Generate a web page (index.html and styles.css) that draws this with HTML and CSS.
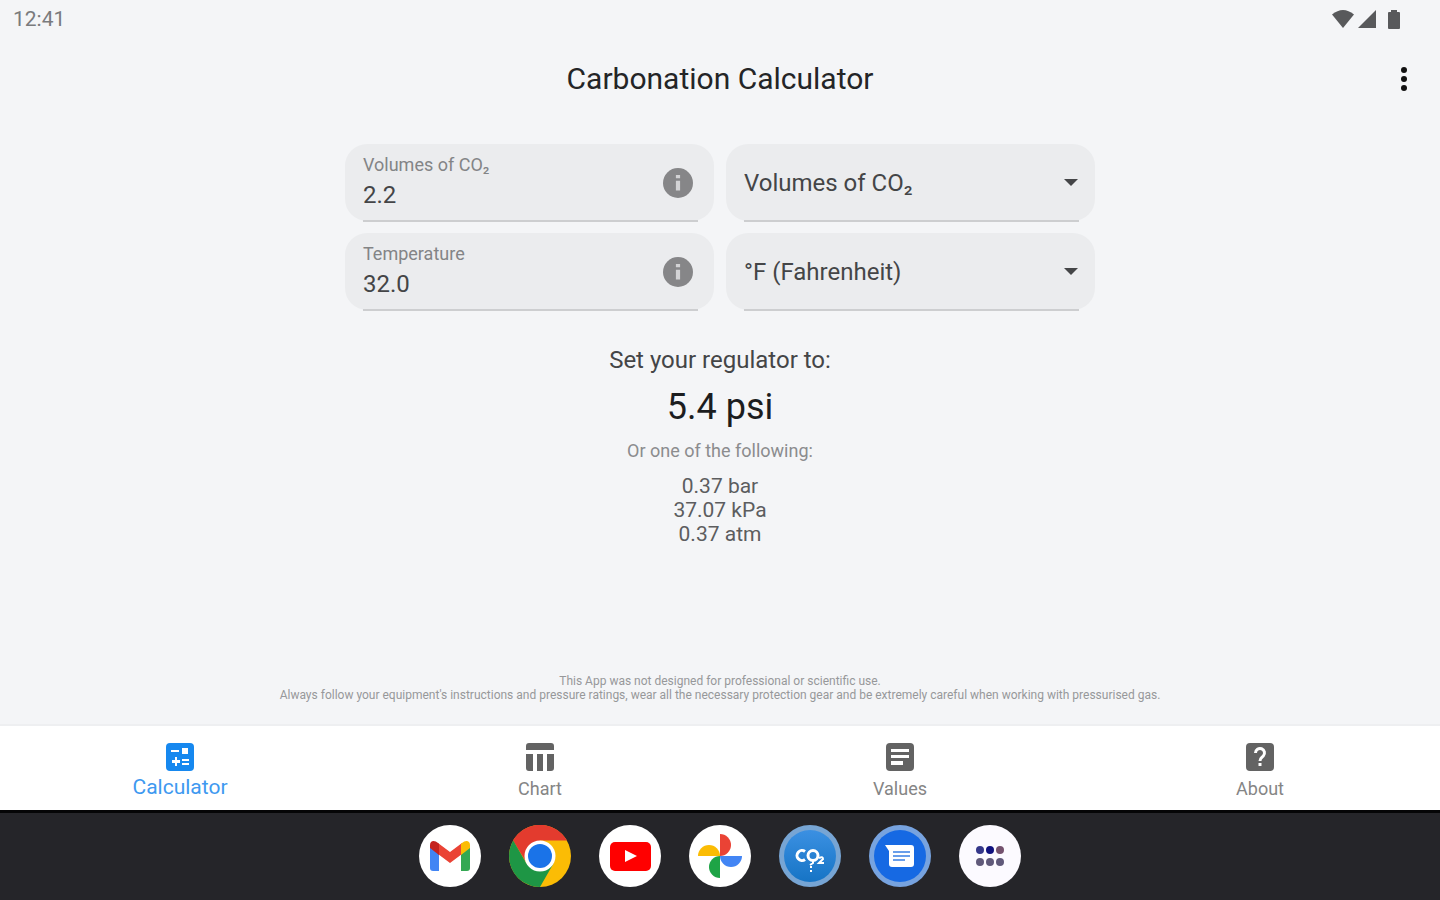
FILE: index.html
```html
<!DOCTYPE html>
<html lang="en">
<head>
<meta charset="utf-8">
<meta name="viewport" content="width=device-width, initial-scale=1">
<title>Carbonation Calculator</title>
<link rel="stylesheet" href="styles.css">
</head>
<body>
<div class="status-bar">
  <time class="clock">12:41</time>
  <div class="status-icons">
    <svg class="wifi" viewBox="0 0 22 18" aria-hidden="true"><path d="M0 4.500Q11-4.500 22 4.500L11 18Z"/></svg>
    <svg class="signal" viewBox="0 0 18 18" aria-hidden="true"><path d="M18 0V18H0Z"/></svg>
    <svg class="battery" viewBox="0 0 12 19" aria-hidden="true"><path d="M3 0h6v2H11a1 1 0 0 1 1 1v15a1 1 0 0 1-1 1H1a1 1 0 0 1-1-1V3a1 1 0 0 1 1-1h2z"/></svg>
  </div>
</div>

<header class="app-bar">
  <h1 class="app-title">Carbonation Calculator</h1>
  <button class="menu-button" type="button" aria-label="More options">
    <svg viewBox="0 0 8 26" aria-hidden="true"><circle cx="4" cy="4" r="3"/><circle cx="4" cy="13" r="3"/><circle cx="4" cy="22" r="3"/></svg>
  </button>
</header>

<main class="content">
  <form class="fields">
    <div class="field">
      <div class="field-text">
        <label class="field-label" for="volumes">Volumes of CO₂</label>
        <input class="field-input" id="volumes" type="text" inputmode="decimal" value="2.2">
      </div>
      <button class="info-button" type="button" aria-label="About volumes of CO₂">
        <svg viewBox="0 0 24 24" aria-hidden="true"><circle cx="12" cy="12" r="10"/><path fill="#d3d3d5" d="M10.600 10.500h2.800V17h-2.800zM10.600 6.600h2.800v2.200h-2.800z"/></svg>
      </button>
    </div>
    <div class="field">
      <select class="field-select" aria-label="Carbonation unit"><option>Volumes of CO₂</option></select>
      <svg class="caret" viewBox="0 0 14 7" aria-hidden="true"><path d="M0 0h14L7 7z"/></svg>
    </div>
    <div class="field">
      <div class="field-text">
        <label class="field-label" for="temperature">Temperature</label>
        <input class="field-input" id="temperature" type="text" inputmode="decimal" value="32.0">
      </div>
      <button class="info-button" type="button" aria-label="About temperature">
        <svg viewBox="0 0 24 24" aria-hidden="true"><circle cx="12" cy="12" r="10"/><path fill="#d3d3d5" d="M10.600 10.500h2.800V17h-2.800zM10.600 6.600h2.800v2.200h-2.800z"/></svg>
      </button>
    </div>
    <div class="field">
      <select class="field-select" aria-label="Temperature unit"><option>°F (Fahrenheit)</option></select>
      <svg class="caret" viewBox="0 0 14 7" aria-hidden="true"><path d="M0 0h14L7 7z"/></svg>
    </div>
  </form>

  <section class="result">
    <p class="result-lead">Set your regulator to:</p>
    <p class="result-value">5.4 psi</p>
    <p class="result-note">Or one of the following:</p>
    <ul class="result-list">
      <li>0.37 bar</li>
      <li>37.07 kPa</li>
      <li>0.37 atm</li>
    </ul>
  </section>

  <p class="disclaimer">This App was not designed for professional or scientific use.<br>Always follow your equipment's instructions and pressure ratings, wear all the necessary protection gear and be extremely careful when working with pressurised gas.</p>
</main>

<nav class="tabs">
  <a class="tab tab-active" href="#calculator" aria-current="page">
    <svg viewBox="0 0 28 28" aria-hidden="true"><rect width="28" height="28" rx="4"/><g fill="#fff"><path d="M5 7h8v2H5zM16 5h6v6h-6zM9 14h2v3h3v3h-3v3H9v-3H6v-3h3zM16 16h7v2h-7zM16 20h7v2h-7z"/></g></svg>
    <span>Calculator</span>
  </a>
  <a class="tab" href="#chart">
    <svg viewBox="0 0 28 28" aria-hidden="true"><path d="M3 0h22a3 3 0 0 1 3 3v4H0V3a3 3 0 0 1 3-3zM0 11h7v17H3a3 3 0 0 1-3-3zM11 11h6v17h-6zM21 11h7v14a3 3 0 0 1-3 3h-4z"/></svg>
    <span>Chart</span>
  </a>
  <a class="tab" href="#values">
    <svg viewBox="0 0 28 28" aria-hidden="true"><rect width="28" height="28" rx="4"/><path fill="#fff" d="M5 6h18v3H5zM5 12h18v3H5zM5 18h12v4H5z"/></svg>
    <span>Values</span>
  </a>
  <a class="tab" href="#about">
    <svg viewBox="0 0 28 28" aria-hidden="true"><rect width="28" height="28" rx="4"/><path fill="none" stroke="#fff" stroke-width="3" d="M9.500 10a4.500 4.500 0 1 1 7.800 3c-1.700 1.800-3.300 2.300-3.300 5"/><path fill="#fff" d="M12.500 20h3v3h-3z"/></svg>
    <span>About</span>
  </a>
</nav>

<footer class="dock">
  <button class="app" type="button" aria-label="Gmail">
    <svg viewBox="0 0 62 62" aria-hidden="true"><circle cx="31" cy="31" r="31" fill="#fff"/><path fill="#4285f4" d="M11 22l9 7v17h-6a3 3 0 0 1-3-3z"/><path fill="#34a853" d="M51 22l-9 7v17h6a3 3 0 0 0 3-3z"/><path fill="#ea4335" d="M19 18l12 9 12-9v11l-12 9-12-9z"/><path fill="#c5221f" d="M11 20c0-5 5-5 8-2l1 1v11l-9-7z"/><path fill="#fbbc04" d="M51 20c0-5-5-5-8-2l-1 1v11l9-7z"/></svg>
  </button>
  <button class="app" type="button" aria-label="Chrome">
    <svg viewBox="0 0 62 62" aria-hidden="true"><circle cx="31" cy="31" r="31" fill="#fbbc05"/><path fill="#e33b2e" d="M4 15.500A31 31 0 0 1 58 15.500H31L18 38.500z"/><path fill="#1e9645" d="M4.200 15.500A31 31 0 0 0 31 62L44.500 38.500H17.500z"/><circle cx="31" cy="31" r="15.500" fill="#fff"/><circle cx="31" cy="31" r="12" fill="#1a73e8"/></svg>
  </button>
  <button class="app" type="button" aria-label="YouTube">
    <svg viewBox="0 0 62 62" aria-hidden="true"><circle cx="31" cy="31" r="31" fill="#fff"/><rect x="11" y="17" width="41" height="29" rx="5" fill="#f00"/><path fill="#fff" d="M26 25l12 6-12 6z"/></svg>
  </button>
  <button class="app" type="button" aria-label="Photos">
    <svg viewBox="0 0 62 62" aria-hidden="true"><circle cx="31" cy="31" r="31" fill="#fff"/><path fill="#ea4335" d="M31 9a11 11 0 0 1 0 22z"/><path fill="#4285f4" d="M53 31a11 11 0 0 1-22 0z"/><path fill="#1ea446" d="M31 53a11 11 0 0 1 0-22z"/><path fill="#fbbc04" d="M9 31a11 11 0 0 1 22 0z"/></svg>
  </button>
  <button class="app" type="button" aria-label="Carbonation Calculator">
    <svg viewBox="0 0 62 62" aria-hidden="true"><defs><linearGradient id="co2" x2="0" y2="1"><stop stop-color="#3b90e2"/><stop offset="1" stop-color="#1674c5"/></linearGradient></defs><circle cx="31" cy="31" r="31" fill="#77a5d4"/><circle cx="31" cy="31" r="26" fill="url(#co2)"/><g fill="none" stroke="#fff" stroke-width="3"><path d="M26 26.500a5 5 0 1 0 0 8"/><circle cx="34" cy="30.500" r="5"/><path stroke-width="2" d="M40 33q4-2 4 1l-4 4h5M34 34v4l-3 2M31 42h2M33 46h-2"/></g></svg>
  </button>
  <button class="app" type="button" aria-label="Messages">
    <svg viewBox="0 0 62 62" aria-hidden="true"><circle cx="31" cy="31" r="31" fill="#77a3df"/><circle cx="31" cy="31" r="26" fill="#1669e3"/><path fill="#fff" d="M16 20h26a3 3 0 0 1 3 3v16a3 3 0 0 1-3 3H23a3 3 0 0 1-3-3V26z"/><path stroke="#699eea" stroke-width="2" d="M24 27h17M24 31h17M24 35h12"/></svg>
  </button>
  <button class="app" type="button" aria-label="All apps">
    <svg viewBox="0 0 62 62" aria-hidden="true"><circle cx="31" cy="31" r="31" fill="#fcfaff"/><g fill="#60597a"><circle cx="21" cy="25" r="4" fill="#35378a"/><circle cx="31" cy="25" r="4" fill="#10117f"/><circle cx="41" cy="25" r="4" fill="#74516e"/><circle cx="21" cy="37" r="4"/><circle cx="31" cy="37" r="4"/><circle cx="41" cy="37" r="4"/></g></svg>
  </button>
</footer>
</body>
</html>
```

FILE: styles.css
```css
* {
  box-sizing: border-box;
}

body {
  margin: 0;
  min-height: 100vh;
  display: flex;
  flex-direction: column;
  background: #f4f5f7;
  color: #444547;
  font-family: Roboto, "Liberation Sans", sans-serif;
}

h1, p, ul {
  margin: 0;
  padding: 0;
  font-weight: 400;
}

svg {
  display: block;
  fill: currentColor;
}

button {
  border: 0;
  padding: 0;
  background: none;
  color: inherit;
}

.status-bar {
  display: flex;
  justify-content: space-between;
  align-items: center;
  height: 38px;
  padding: 0 40px 0 13px;
}

.clock {
  font-size: 21px;
  line-height: 24px;
  color: #7a7b7d;
}

.status-icons {
  display: flex;
  align-items: center;
  gap: 4px;
  color: #58595b;
}

.wifi { width: 22px; }
.signal { width: 18px; }
.battery { width: 12px; margin-left: 8px; }

.app-bar {
  display: grid;
  grid-template-columns: 1fr auto 1fr;
  align-items: center;
  height: 82px;
  padding: 0 32px;
}

.app-title {
  grid-column: 2;
  font-size: 30px;
  line-height: 36px;
  color: #242527;
}

.menu-button {
  justify-self: end;
  color: #111;
}

.menu-button svg {
  width: 8px;
}

.content {
  flex: 1;
  display: flex;
  flex-direction: column;
  align-items: center;
  padding: 24px 16px 22px;
}

.fields {
  display: grid;
  grid-template-columns: 1fr 1fr;
  gap: 12px;
  width: 100%;
  max-width: 750px;
}

.field {
  position: relative;
  display: flex;
  align-items: center;
  min-height: 77px;
  padding: 0 20px 0 18px;
  border-radius: 22px;
  background: #ebecee;
}

.field::after {
  content: "";
  position: absolute;
  right: 16px;
  bottom: -1px;
  left: 18px;
  height: 2px;
  background: #cdced0;
}

.field-text {
  flex: 1;
  min-width: 0;
}

.field-label {
  display: block;
  font-size: 18px;
  line-height: 24px;
  color: #838486;
}

.field-input {
  display: block;
  width: 100%;
  height: 36px;
  padding: 0;
  border: 0;
  outline: 0;
  background: none;
  color: #444547;
  font: 24px/36px Roboto, "Liberation Sans", sans-serif;
}

.info-button {
  color: #868688;
}

.info-button svg {
  width: 36px;
  height: 36px;
  margin-right: -2px;
}

.field-select {
  width: 100%;
  height: 77px;
  padding: 0 32px 0 0;
  border: 0;
  outline: 0;
  appearance: none;
  background: none;
  color: #444547;
  font: 24px/32px Roboto, "Liberation Sans", sans-serif;
}

.caret {
  position: absolute;
  right: 17px;
  width: 14px;
  pointer-events: none;
}

.result {
  padding-top: 36px;
  text-align: center;
}

.result-lead {
  font-size: 24px;
  line-height: 28px;
}

.result-value {
  padding: 12px 0;
  font-size: 36px;
  line-height: 42px;
  color: #1c1d1f;
}

.result-note {
  font-size: 18px;
  line-height: 22px;
  color: #8b8c8e;
}

.result-list {
  padding-top: 12px;
  list-style: none;
  font-size: 21px;
  line-height: 24px;
  color: #5c5d5f;
}

.disclaimer {
  margin-top: auto;
  font-size: 12px;
  line-height: 14px;
  text-align: center;
  color: #97989a;
}

.tabs {
  display: grid;
  grid-template-columns: repeat(4, 1fr);
  height: 86px;
  border-top: 2px solid #eeeff1;
  background: #fff;
}

.tab {
  display: flex;
  flex-direction: column;
  align-items: center;
  gap: 6px;
  padding-top: 17px;
  color: #636363;
  font-size: 18px;
  line-height: 24px;
  text-decoration: none;
}

.tab svg {
  width: 28px;
  height: 28px;
}

.tab span {
  color: #858585;
}

.tab-active {
  gap: 4px;
  color: #1688ef;
  font-size: 21px;
}

.tab-active span {
  color: #3e99f0;
}

.dock {
  display: flex;
  justify-content: center;
  align-items: center;
  gap: 28px;
  height: 90px;
  padding-bottom: 2px;
  border-top: 3px solid #050506;
  background: #252529;
}

.app svg {
  width: 62px;
  height: 62px;
}
```
